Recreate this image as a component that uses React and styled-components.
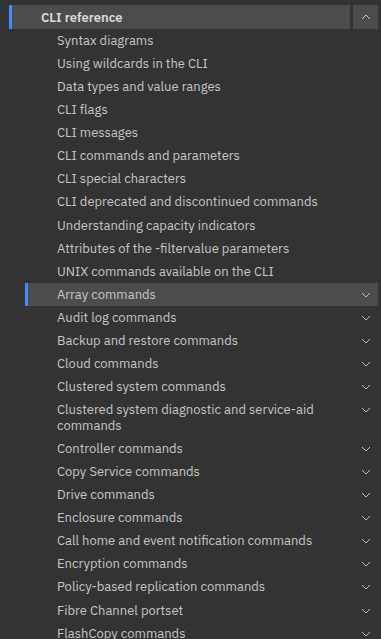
import React from 'react';
import styled, {createGlobalStyle} from 'styled-components';

const GlobalStyle=createGlobalStyle`
  html,body{
    margin:0;
    padding:0;
    background:#333333;
    overflow:hidden;
  }
`;

const Nav=styled.nav`
  width:381px;
  height:639px;
  overflow:hidden;
  padding:0 3px 0 9px;
  box-sizing:border-box;
  font-family:'IBM Plex Sans',Roboto,sans-serif;
  font-size:13px;
  color:#c6c6c6;
`;

const CutRow=styled.div`
  margin-top:-19px;
  height:24px;
  line-height:22px;
  padding-left:32px;
  color:#c6c6c6;
`;

const ParentRow=styled.div`
  display:flex;
  gap:3px;
`;

const ParentLink=styled.div`
  flex:1;
  height:24px;
  display:flex;
  align-items:center;
  padding-left:29px;
  background:#4c4c4c;
  border-left:3px solid #4589ff;
  font-weight:600;
  color:#dcdcdc;
`;

const ToggleButton=styled.button`
  width:25px;
  height:24px;
  border:none;
  padding:0;
  background:#4c4c4c;
  display:flex;
  align-items:center;
  justify-content:center;
  color:#c6c6c6;
`;

const ChildList=styled.ul`
  list-style:none;
  margin:0;
  padding:0 0 0 16px;
`;

const ChildRow=styled.li`
  display:flex;
  align-items:center;
  padding:3.8px 0 3.8px 29px;
  line-height:15.5px;
  border-left:3px solid ${p=>p.$active ? '#4589ff' : 'transparent'};
  background:${p=>p.$active ? '#4c4c4c' : 'transparent'};
`;

const Label=styled.span`
  flex:1;
  padding-right:${p=>p.$expandable ? '0' : '24px'};
`;

const Chevron=styled.span`
  width:24px;
  flex:none;
  display:flex;
  justify-content:center;
  align-self:flex-start;
  padding-top:5px;
`;

const Down=()=>(
  <svg width="10" height="6" viewBox="0 0 10 6"><path d="M1 1l4 4 4-4" fill="none" stroke="#bdbdbd" strokeWidth="1"/></svg>
);

const Up=()=>(
  <svg width="10" height="6" viewBox="0 0 10 6"><path d="M1 5l4-4 4 4" fill="none" stroke="#c6c6c6" strokeWidth="1"/></svg>
);

const plain=[
  'Syntax diagrams',
  'Using wildcards in the CLI',
  'Data types and value ranges',
  'CLI flags',
  'CLI messages',
  'CLI commands and parameters',
  'CLI special characters',
  'CLI deprecated and discontinued commands',
  'Understanding capacity indicators',
  'Attributes of the -filtervalue parameters',
  'UNIX commands available on the CLI',
];

const groups=[
  'Array commands',
  'Audit log commands',
  'Backup and restore commands',
  'Cloud commands',
  'Clustered system commands',
  'Clustered system diagnostic and service-aid commands',
  'Controller commands',
  'Copy Service commands',
  'Drive commands',
  'Enclosure commands',
  'Call home and event notification commands',
  'Encryption commands',
  'Policy-based replication commands',
  'Fibre Channel portset',
  'FlashCopy commands',
];

function App(){
  return (
    <>
      <GlobalStyle/>
      <Nav>
        <CutRow>Managing the system</CutRow>
        <ParentRow>
          <ParentLink>CLI reference</ParentLink>
          <ToggleButton aria-label="collapse"><Up/></ToggleButton>
        </ParentRow>
        <ChildList>
          {plain.map(t=>(
            <ChildRow key={t}><Label>{t}</Label></ChildRow>
          ))}
          {groups.map((t,i)=>(
            <ChildRow key={t} $active={i===0}>
              <Label $expandable>{t}</Label>
              <Chevron><Down/></Chevron>
            </ChildRow>
          ))}
        </ChildList>
      </Nav>
    </>
  );
}

export default App;
